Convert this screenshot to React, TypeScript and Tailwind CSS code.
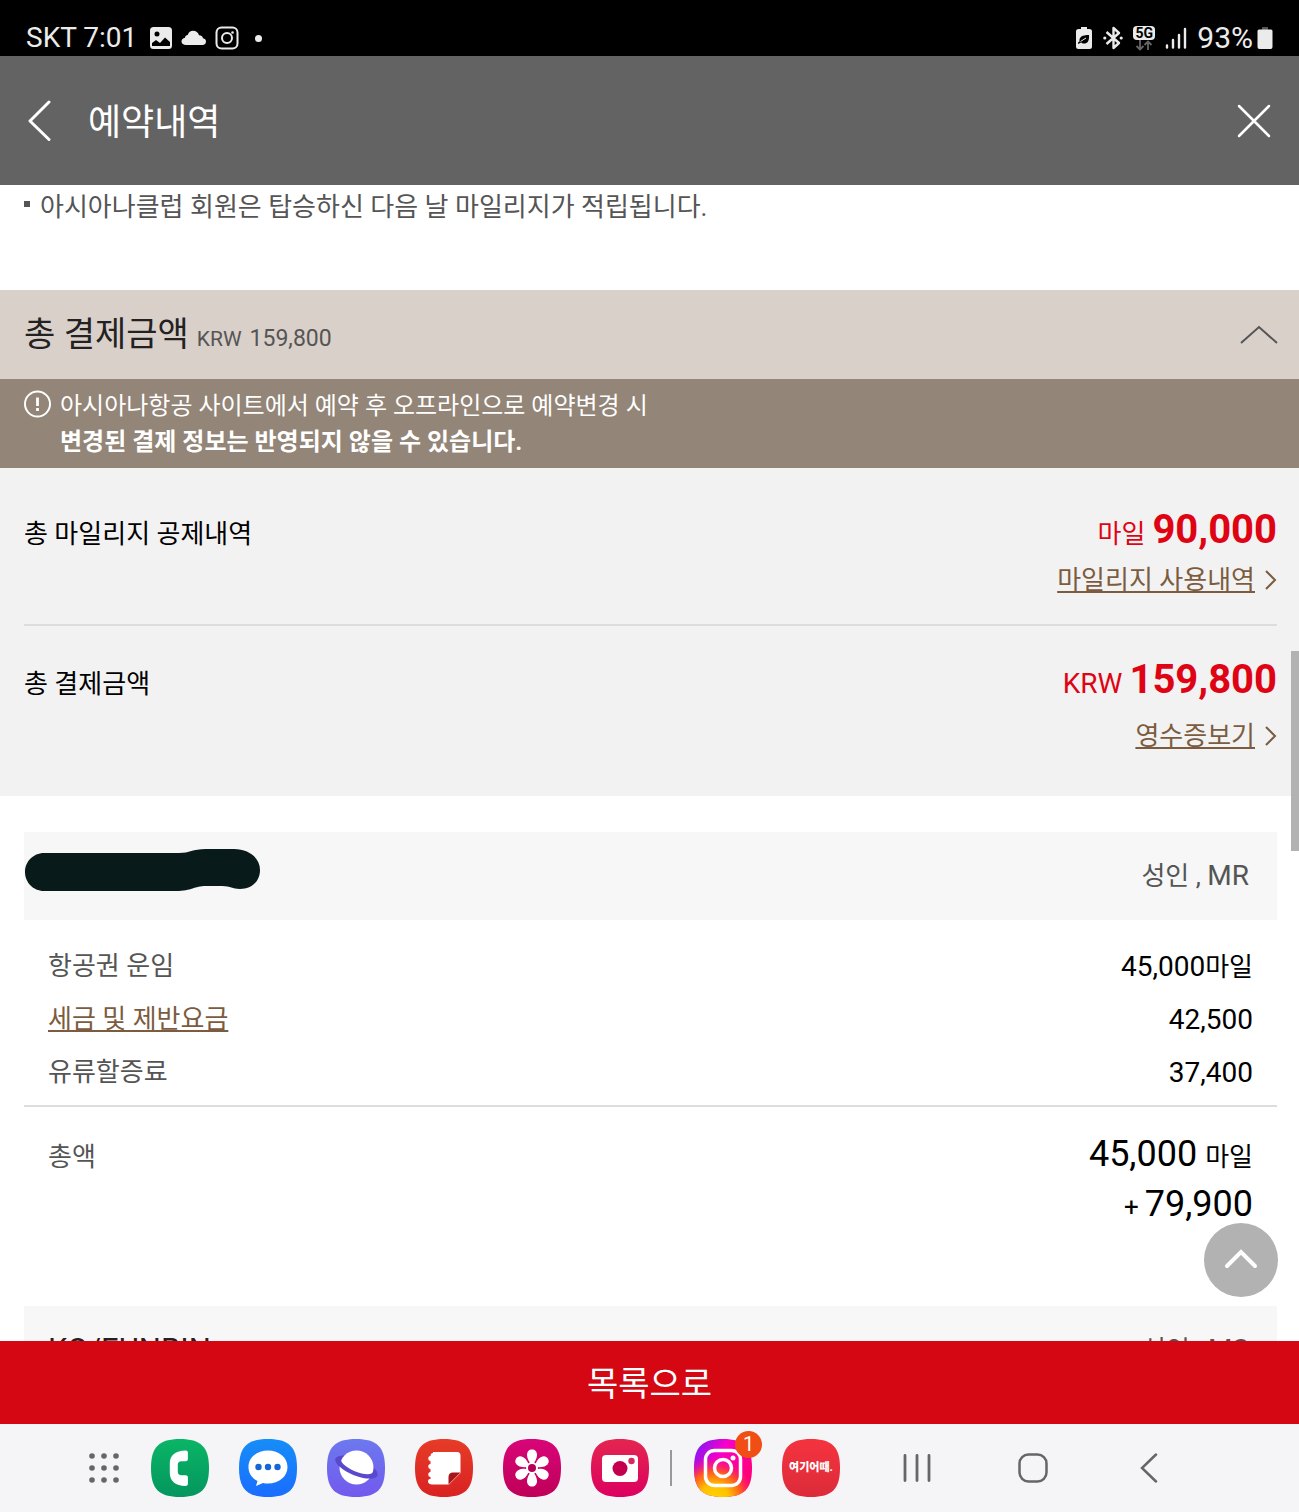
import type { ReactNode } from "react"

const sans = "font-['Roboto','Noto_Sans_CJK_KR',sans-serif]"

const StatusBar = () => (
  <div className="h-14 shrink-0 bg-black text-[#ebebeb] flex items-end justify-between px-[26px] pb-[2px]">
    <div className="flex items-center gap-2">
      <span className="text-[28px] leading-8 mr-1">SKT 7:01</span>
      <svg width="24" height="24" viewBox="0 0 24 24">
        <path
          fillRule="evenodd"
          fill="currentColor"
          d="M4 1h15.500a3.500 3.500 0 0 1 3.500 3.500v15a3.500 3.500 0 0 1-3.500 3.500h-15A3.500 3.500 0 0 1 1 19.500v-15A3.500 3.500 0 0 1 4 1zM8 5.500a2.500 2.500 0 1 0 0 5 2.500 2.500 0 0 0 0-5zM3 17v3h18v-4l-5-4.500-5 5.500-4-3z"
        />
      </svg>
      <svg width="26" height="24" viewBox="0 0 26 24">
        <path fill="currentColor" d="M5 19c-2.500 0-4.500-1.500-4.500-3.500 0-2.200 1.500-3.500 3.500-3.800.2-1.800 1.200-2.700 2.700-2.700C7.700 6.200 9.600 4.800 12 4.800c3 0 5.200 1.800 6 4.400 2-.1 3.600 1 4 3 1.800.3 3 1.600 3 3.300 0 2-1.500 3.500-3.500 3.500z" />
      </svg>
      <svg width="24" height="24" viewBox="0 0 24 24" fill="none" stroke="currentColor" strokeWidth="2">
        <rect x="1.500" y="1.500" width="21" height="21" rx="5" />
        <circle cx="12" cy="12" r="5" />
        <circle cx="17.500" cy="6.500" r="1.300" fill="currentColor" stroke="none" />
      </svg>
      <span className="size-[7px] rounded-full bg-[#ebebeb] ml-2" />
    </div>

    <div className="flex items-center gap-[10px]">
      <svg width="18" height="24" viewBox="0 0 18 24">
        <path fill="currentColor" d="M6 1h6v2h2.500A2.500 2.500 0 0 1 17 5.500v15a2.500 2.500 0 0 1-2.500 2.500h-11A2.500 2.500 0 0 1 1 20.500v-15A2.500 2.500 0 0 1 3.500 3H6z" />
        <path fill="#000" d="M14 9c.5 6-1.500 8.500-5 8.500-1.500 0-2.300-.5-2.800-1L3 18v-1.500l1.500-1C4 11 7 9 14 9z" />
        <path stroke="#ebebeb" d="M5.500 15.500 11 12" />
      </svg>
      <svg width="20" height="24" viewBox="0 0 20 24" fill="none" stroke="currentColor" strokeWidth="2.400">
        <path d="M3.500 6 16 17l-5.500 5V2L16 7 3.500 18" strokeLinejoin="round" />
        <circle cx="1.800" cy="12" r="1.600" fill="currentColor" stroke="none" />
        <circle cx="18.200" cy="12" r="1.600" fill="currentColor" stroke="none" />
      </svg>
      <div className="w-[22px] flex flex-col items-center">
        <span className="w-[22px] rounded-sm bg-[#ebebeb] text-center text-sm leading-[14px] font-bold text-black">5G</span>
        <svg width="18" height="11" viewBox="0 0 18 11" fill="none" stroke="#666" strokeWidth="1.800">
          <path d="M5 0v9M1.500 6 5 9.500 8.500 6M13 10V2M9.500 5 13 1.500 16.500 5" />
        </svg>
      </div>
      <svg width="22" height="24" viewBox="0 0 22 24" stroke="currentColor" strokeWidth="2.400" strokeLinecap="round">
        <path d="M2 19.500v2M8 14v7.500M14 9v12.500M20 3v18.500" />
      </svg>
      <div className="flex items-center gap-1">
        <span className="text-[30px] leading-8">93%</span>
        <svg width="16" height="24" viewBox="0 0 16 24">
          <path fill="#555" d="M5 1h6v3H5z" />
          <path fill="currentColor" d="M2 3.500h12A1.500 1.500 0 0 1 15.500 5v16a2 2 0 0 1-2 2h-11a2 2 0 0 1-2-2V5A1.500 1.500 0 0 1 2 3.500z" />
        </svg>
      </div>
    </div>
  </div>
)

const Header = () => (
  <header className="h-[129px] shrink-0 bg-[#636363] text-white flex items-center justify-between px-[26px]">
    <div className="flex items-center gap-9">
      <button aria-label="back">
        <svg width="26" height="42" viewBox="0 0 26 42" fill="none" stroke="currentColor" strokeWidth="3" strokeLinecap="round" strokeLinejoin="round">
          <path d="M23 2 4 21l19 18.500" />
        </svg>
      </button>
      <h1 className="text-4xl pt-1">예약내역</h1>
    </div>
    <button aria-label="close">
      <svg width="38" height="38" viewBox="0 0 38 38" stroke="currentColor" strokeWidth="2.500" strokeLinecap="round">
        <path d="m4 4 30 30M34 4 4 34" />
      </svg>
    </button>
  </header>
)

const MoreLink = ({ children }: { children: ReactNode }) => (
  <a href="#" className="flex items-center justify-end gap-2 text-[26px] leading-11 text-[#7c5c40]">
    <span className="underline decoration-2 underline-offset-2">{children}</span>
    <svg width="14" height="22" viewBox="0 0 14 22" fill="none" stroke="currentColor" strokeWidth="2">
      <path d="m3 2 9 9-9 9" />
    </svg>
  </a>
)

const Passenger = ({ name, type, title }: { name: ReactNode; type: string; title: string }) => (
  <div className="h-[88px] bg-[#f7f7f7] flex justify-between pr-7 text-[#555]">
    {name}
    <span className="self-center text-[26px]">
      {type} , <span className="text-[28px]">{title}</span>
    </span>
  </div>
)

const App = () => {
  return (
    <div className={`${sans} h-screen flex flex-col bg-white text-black`}>
      <StatusBar />
      <Header />

      <main className="relative flex-1 min-h-0 overflow-hidden">
        <div className="h-[105px] pl-6 flex items-start gap-[10px] text-[26px] leading-11 text-[#555]">
          <span className="size-[6px] bg-[#555] mt-4" />
          <p>아시아나클럽 회원은 탑승하신 다음 날 마일리지가 적립됩니다.</p>
        </div>

        <section>
          <div className="h-[89px] bg-[#dad0ca] flex items-center justify-between pl-6 pr-5">
            <h2 className="flex items-baseline gap-2 text-[34px] text-[#222]">
              총 결제금액
              <span className="flex items-baseline gap-2 text-[#555]">
                <span className="text-[21px]">KRW</span>
                <span className="text-[23px]">159,800</span>
              </span>
            </h2>
            <button aria-label="fold">
              <svg width="40" height="22" viewBox="0 0 40 22" fill="none" stroke="#555" strokeWidth="2">
                <path d="M2 19 20 3l18 16" />
              </svg>
            </button>
          </div>

          <div className="h-[89px] bg-[#938577] text-white flex gap-2 pl-6 pt-[9px] text-2xl leading-9">
            <svg width="28" height="28" viewBox="0 0 28 28" fill="none" stroke="currentColor" strokeWidth="2" className="mt-[2px]">
              <circle cx="13.500" cy="14" r="12.500" />
              <path d="M13.500 7.500v8.500M13.500 18v3" strokeWidth="2.800" />
            </svg>
            <p>
              아시아나항공 사이트에서 예약 후 오프라인으로 예약변경 시
              <br />
              <strong>변경된 결제 정보는 반영되지 않을 수 있습니다.</strong>
            </p>
          </div>

          <div className="bg-[#f2f2f2] pl-6 pr-[22px] pt-[34px] pb-[38px]">
            <div className="flex items-baseline justify-between">
              <h3 className="text-[26px] leading-none">총 마일리지 공제내역</h3>
              <p className="flex items-baseline gap-[7px] text-[#df0414]">
                <span className="text-[26px] leading-none">마일</span>
                <strong className="text-[40px] leading-[56px]">90,000</strong>
              </p>
            </div>
            <div className="pb-[22px] border-b-2 border-[#ddd]">
              <MoreLink>마일리지 사용내역</MoreLink>
            </div>
            <div className="flex items-baseline justify-between mt-[26px]">
              <h3 className="text-[26px] leading-none">총 결제금액</h3>
              <p className="flex items-baseline gap-[7px] text-[#df0414]">
                <span className="text-[28px] leading-none">KRW</span>
                <strong className="text-[40px] leading-[56px]">159,800</strong>
              </p>
            </div>
            <div className="mt-[6px]">
              <MoreLink>영수증보기</MoreLink>
            </div>
          </div>
        </section>

        <section className="pl-6 pr-[22px] pt-9">
          <Passenger
            name={
              <svg width="238" height="44" viewBox="0 0 238 44" className="mt-4">
                <path
                  fill="#081a1a"
                  d="M20 5H155C166 5 168 1 182 1H210C225 1 236 10 236 22S227 41 216 41C208 41 207 38 198 38H182C170 38 168 43 152 43H20C9 43 1 34 1 24S9 5 20 5z"
                />
              </svg>
            }
            type="성인"
            title="MR"
          />

          <dl className="grid grid-cols-[1fr_auto] px-6 pt-5 pb-[6px] text-[26px] leading-[53px] border-b-2 border-[#ddd]">
            <dt className="text-[#555]">항공권 운임</dt>
            <dd className="flex items-baseline justify-end">
              <span className="text-[28px]">45,000</span>
              <span className="leading-none">마일</span>
            </dd>
            <dt>
              <a href="#" className="text-[#7c5c40] underline decoration-2 underline-offset-2">
                세금 및 제반요금
              </a>
            </dt>
            <dd className="text-right text-[28px]">42,500</dd>
            <dt className="text-[#555]">유류할증료</dt>
            <dd className="text-right text-[28px]">37,400</dd>
          </dl>

          <dl className="flex items-baseline justify-between px-6 pt-[22px] pb-[77px] text-[26px] leading-none">
            <dt className="text-[#555]">총액</dt>
            <dd>
              <p className="flex items-baseline justify-end gap-2">
                <span className="text-4xl leading-[50px]">45,000</span>
                <span>마일</span>
              </p>
              <p className="flex items-baseline justify-end gap-[6px]">
                <span>+</span>
                <span className="text-4xl leading-[50px]">79,900</span>
              </p>
            </dd>
          </dl>

          <Passenger
            name={<span className="self-center pl-6 text-[31px] text-[#222]">KO/EUNBIN</span>}
            type="성인"
            title="MS"
          />
        </section>

        <button
          aria-label="top"
          className="absolute right-[21px] bottom-11 size-[74px] rounded-full bg-[#b2b2b2] flex items-center justify-center"
        >
          <svg width="36" height="24" viewBox="0 0 36 24" fill="none" stroke="#fff" strokeWidth="4" strokeLinecap="round">
            <path d="M4 18 18 4l14 14" />
          </svg>
        </button>
        <div className="absolute right-0 top-[466px] w-2 h-[200px] bg-[#b2b2b2]" />
      </main>

      <button className="h-[83px] shrink-0 bg-[#d50713] text-white text-[34px] pt-1">목록으로</button>
      <TaskBar />
    </div>
  )
}

const squircle = "M29 0C50 0 58 8 58 29S50 58 29 58 0 50 0 29 8 0 29 0z"

const AppIcon = ({ label, fill, children }: { label: string; fill: string; children: ReactNode }) => (
  <button aria-label={label} className="size-[58px]">
    <svg width="58" height="58" viewBox="0 0 58 58">
      <path d={squircle} fill={fill} />
      {children}
    </svg>
  </button>
)

const Gradients = () => (
  <svg width="0" height="0" className="absolute">
    <defs>
      <linearGradient id="green" x2="0" y2="1">
        <stop stopColor="#0ab566" />
        <stop offset="1" stopColor="#04965e" />
      </linearGradient>
      <linearGradient id="blue" x2="0" y2="1">
        <stop stopColor="#168df8" />
        <stop offset="1" stopColor="#1a6dff" />
      </linearGradient>
      <linearGradient id="violet" x2="0" y2="1">
        <stop stopColor="#6c79ee" />
        <stop offset="1" stopColor="#7259ee" />
      </linearGradient>
      <linearGradient id="red" x2="0" y2="1">
        <stop stopColor="#e63c28" />
        <stop offset="1" stopColor="#d92222" />
      </linearGradient>
      <linearGradient id="magenta" x2="0" y2="1">
        <stop stopColor="#d80578" />
        <stop offset="1" stopColor="#bf0058" />
      </linearGradient>
      <linearGradient id="rose" x2="0" y2="1">
        <stop stopColor="#e3264f" />
        <stop offset="1" stopColor="#dc0060" />
      </linearGradient>
      <linearGradient id="coral" x2="0" y2="1">
        <stop stopColor="#f5333f" />
        <stop offset="1" stopColor="#dc2b3a" />
      </linearGradient>
      <linearGradient id="pink" x1="0" y1="0" x2="1" y2="0.6">
        <stop stopColor="#6a1cff" />
        <stop offset="0.45" stopColor="#f800c8" />
        <stop offset="1" stopColor="#ff0078" />
      </linearGradient>
      <radialGradient id="sun" cx="0.35" cy="1.05" r="0.75">
        <stop stopColor="#ffd600" />
        <stop offset="0.35" stopColor="#ffc000" />
        <stop offset="0.65" stopColor="#ff5a20" />
        <stop offset="1" stopColor="#ff0080" stopOpacity="0" />
      </radialGradient>
    </defs>
  </svg>
)

const TaskBar = () => (
  <footer className="h-[88px] shrink-0 bg-[#f5f5f8] flex items-center pl-[87px] pr-[135px] justify-between">
    <Gradients />
    <div className="flex items-center gap-[30px]">
      <button aria-label="apps">
        <svg width="34" height="34" viewBox="0 0 34 34" fill="#666">
          {[5, 17, 29].map((y) => [5, 17, 29].map((x) => <circle key={`${x}-${y}`} cx={x} cy={y} r="2.800" />))}
        </svg>
      </button>
      <AppIcon label="phone" fill="url(#green)">
        <path
          fill="#fff"
          d="M34.500 11.500c1.600 0 2.400.8 2.400 2.200v6.300c0 1.400-.8 2.200-2.300 2.200h-4.100c-2.500 0-3.700 1.200-3.700 3.500v7c0 2.300 1.200 3.500 3.700 3.500h4.100c1.500 0 2.300.8 2.300 2.200v6.300c0 1.400-.8 2.200-2.400 2.200-10 0-15.700-4.900-15.700-12.900v-9.600c0-8 5.700-12.900 15.700-12.900z"
        />
      </AppIcon>
      <AppIcon label="messages" fill="url(#blue)">
        <path fill="#fff" d="M29 11.500c11 0 19.500 7 19.500 16.500S40 44.500 29 44.500c-2 0-3.500-.2-5-.6L17 47l1.500-5C12.500 39 9.500 34 9.500 28c0-9.500 8.500-16.500 19.500-16.500z" />
        <g fill="#1465d6">
          <circle cx="19.500" cy="28" r="3.200" />
          <circle cx="29" cy="28" r="3.200" />
          <circle cx="38.500" cy="28" r="3.200" />
        </g>
      </AppIcon>
      <AppIcon label="internet" fill="url(#violet)">
        <ellipse cx="29.500" cy="28" rx="22.500" ry="8.500" transform="rotate(22 29.500 28)" fill="#5a49cc" />
        <circle cx="29.500" cy="28.500" r="17" fill="#fff" />
        <path
          fill="#5a49cc"
          transform="rotate(22 29.500 28)"
          d="M7 28C7 32.700 17 36.500 29.500 36.500S52 32.700 52 28c-1.500-2-3-2.500-5-3 1 5-8 7.500-17.500 7.500S11 30 12.500 25c-3 0-5 1.500-5.500 3z"
        />
      </AppIcon>
      <AppIcon label="notes" fill="url(#red)">
        <path
          fill="#fff"
          d="M18 13h24a3.500 3.500 0 0 1 3.500 3.500V34L34 45.500H17c-2 0-4-1-4-3s1-2.500 2.500-2.500v-2c-3 0-3-5 0-5v-3c-3 0-3-5 0-5v-3c-3 0-3-5 0-5 0-2 1-3 2.500-3z"
        />
        <path fill="#a8161c" d="M33.500 45.500V38c0-3 1.500-4.500 4.500-4.500h7.500z" />
      </AppIcon>
      <AppIcon label="gallery" fill="url(#magenta)">
        <g fill="#fff">
          {[0, 60, 120, 180, 240, 300].map((r) => (
            <path key={r} transform={`rotate(${r} 29 29)`} d="M29 26c-3-3-5-6.500-5-10 0-3.500 2-5.500 5-5.500s5 2 5 5.500c0 3.500-2 7-5 10z" />
          ))}
          <circle cx="29" cy="29" r="6" />
        </g>
        <circle cx="29" cy="29" r="4" fill="#b50058" />
      </AppIcon>
      <AppIcon label="camera" fill="url(#rose)">
        <rect x="11" y="16" width="36" height="27" rx="4" fill="#fff" />
        <circle cx="29" cy="29.500" r="7.500" fill="#c4004e" />
        <circle cx="40.500" cy="22" r="3.200" fill="#d8285c" />
      </AppIcon>
      <div className="flex items-center gap-[22px] -ml-[9px]">
        <span className="w-[2px] h-9 bg-[#999]" />
        <div className="relative flex">
          <AppIcon label="instagram" fill="url(#pink)">
            <path d={squircle} fill="url(#sun)" />
            <g fill="none" stroke="#fff" strokeWidth="3.500">
              <rect x="11.500" y="11.500" width="35" height="35" rx="9" />
              <circle cx="29" cy="29" r="8.500" />
            </g>
            <circle cx="39" cy="19" r="2.500" fill="#fff" />
          </AppIcon>
          <span className="absolute -top-2 -right-[10px] size-[27px] rounded-full bg-[#f04e14] text-white text-xl leading-[27px] text-center">1</span>
        </div>
      </div>
      <button aria-label="여기어때" className="relative size-[58px]">
        <svg width="58" height="58" viewBox="0 0 58 58">
          <path d={squircle} fill="url(#coral)" />
        </svg>
        <span className="absolute inset-0 flex items-center justify-center text-white text-[11px] font-black">여기어때.</span>
      </button>
    </div>

    <div className="flex items-center gap-[86px]">
      <button aria-label="recents">
        <svg width="30" height="30" viewBox="0 0 30 30" stroke="#666" strokeWidth="2.800" strokeLinecap="round">
          <path d="M3 2.500v25M15 2.500v25M27 2.500v25" />
        </svg>
      </button>
      <button aria-label="home">
        <svg width="30" height="30" viewBox="0 0 30 30" fill="none" stroke="#666" strokeWidth="2.500">
          <rect x="1.500" y="1.500" width="27" height="27" rx="9" />
        </svg>
      </button>
      <button aria-label="back">
        <svg width="30" height="30" viewBox="0 0 30 30" fill="none" stroke="#666" strokeWidth="2.500" strokeLinecap="round">
          <path d="M22 1.500 8 15l14 13.500" />
        </svg>
      </button>
    </div>
  </footer>
)

export default App
